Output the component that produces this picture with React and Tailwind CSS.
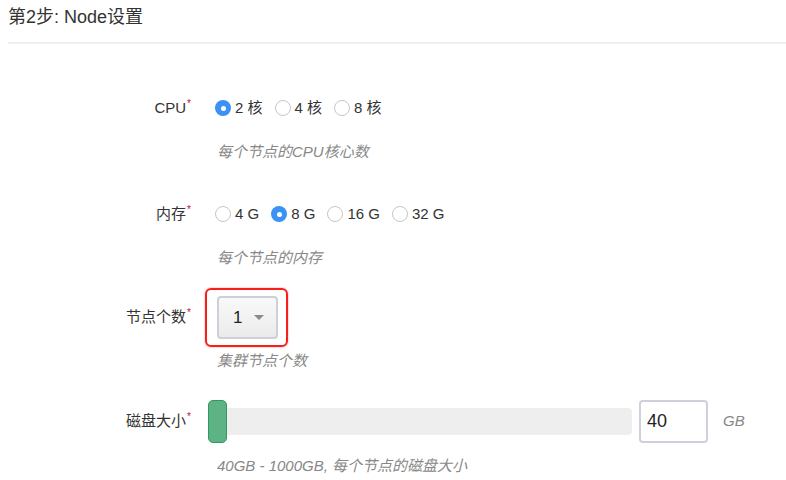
import React from 'react';

const font = { fontFamily: '"Liberation Sans", "Noto Sans CJK SC", sans-serif' };

const Radio = ({ label, checked }) => (
  <label className="flex items-center gap-[4px] mr-[12px]">
    {checked ? (
      <span className="shrink-0 w-[16px] h-[16px] rounded-full bg-[#3a92f2] flex items-center justify-center">
        <span className="w-[5px] h-[5px] rounded-full bg-white" />
      </span>
    ) : (
      <span className="shrink-0 w-[16px] h-[16px] rounded-full border-[1.5px] border-[#c6c6c6] bg-white" />
    )}
    <span className="text-[15px] text-[#333] whitespace-nowrap">{label}</span>
  </label>
);

const Label = ({ children }) => (
  <div className="w-[191px] text-right text-[15px] text-[#333] shrink-0 whitespace-nowrap">
    {children}
    <span className="text-[#c0141c] text-[10px] align-top relative top-[-1px] ml-[1px]">*</span>
  </div>
);

const Help = ({ children, className = '' }) => (
  <div className={`pl-[217px] text-[15px] leading-[20px] italic text-[#888] ${className}`}>{children}</div>
);

export default function App() {
  const cpu = ['2 核', '4 核', '8 核'];
  const mem = ['4 G', '8 G', '16 G', '32 G'];

  return (
    <div className="w-[786px] h-[480px] bg-white overflow-hidden" style={font}>
      <div className="ml-[8px] h-[44px] border-b-2 border-[#efefef] pt-[7px]">
        <div className="text-[18px] leading-[20px] text-[#333]">第2步: Node设置</div>
      </div>

      {/* CPU */}
      <div className="flex items-center h-[24px] mt-[52px]">
        <Label>CPU</Label>
        <div className="flex items-center pl-[24px]">
          {cpu.map((c, i) => <Radio key={c} label={c} checked={i === 0} />)}
        </div>
      </div>
      <Help className="mt-[22px]">每个节点的CPU核心数</Help>

      {/* 内存 */}
      <div className="flex items-center h-[24px] mt-[40px]">
        <Label>内存</Label>
        <div className="flex items-center pl-[24px]">
          {mem.map((m, i) => <Radio key={m} label={m} checked={i === 1} />)}
        </div>
      </div>
      <Help className="mt-[22px]">每个节点的内存</Help>

      {/* 节点个数 */}
      <div className="flex items-center mt-[20px]">
        <Label>节点个数</Label>
        <div className="ml-[14px] border-2 border-[#f5201a] rounded-[6px] pl-[10px] pr-[8px] pt-[6px] pb-[6px] shadow-[0_0_2px_rgba(245,32,26,0.5)]">
          <div className="w-[61px] h-[43px] rounded-[4px] border-2 border-[#cfcfdc] bg-gradient-to-b from-[#f9f9f9] to-[#ebebeb] flex items-center pl-[14px]">
            <span className="text-[17px] text-[#222]">1</span>
            <svg className="ml-[12px]" width="10" height="6" viewBox="0 0 10 6">
              <path d="M0 0 L10 0 L5 5 Z" fill="#8a8a8a" />
            </svg>
          </div>
        </div>
      </div>
      <Help className="mt-[4px]">集群节点个数</Help>

      {/* 磁盘大小 */}
      <div className="flex items-center h-[43px] mt-[29px]">
        <Label>磁盘大小</Label>
        <div className="ml-[17px] w-[424px] h-[27px] bg-[#eeeeee] rounded-[4px] relative flex items-center">
          <div className="w-[19px] h-[43px] rounded-[5px] bg-[#5db384] border border-[#2f9a5e]" />
        </div>
        <div className="ml-[7px] w-[69px] h-[43px] border-2 border-[#cfcfdf] rounded-[4px] flex items-center pl-[6px]">
          <span className="text-[18px] text-[#222]">40</span>
        </div>
        <span className="ml-[15px] text-[15px] italic text-[#888]">GB</span>
      </div>
      <Help className="mt-[13px]">40GB - 1000GB, 每个节点的磁盘大小</Help>
    </div>
  );
}
